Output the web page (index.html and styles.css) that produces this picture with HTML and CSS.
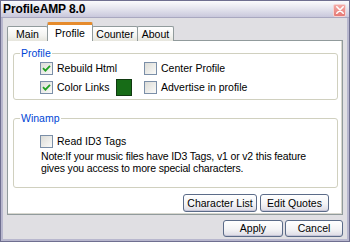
FILE: index.html
```html
<!DOCTYPE html>
<html lang="en">
<head>
    <meta charset="UTF-8">
    <title>ProfileAMP 8.0</title>
    <link rel="stylesheet" href="styles.css">
</head>
<body>
    <div class="window">
        <div class="titlebar">
            <span class="titlebar__text">ProfileAMP 8.0</span>
            <button class="titlebar__close" type="button" title="Close">
                <svg viewBox="0 0 10 10" width="8" height="8" aria-hidden="true">
                    <path d="M1 1L9 9M9 1L1 9" stroke="#fff" stroke-width="2" stroke-linecap="round"/>
                </svg>
            </button>
        </div>
        <div class="client">
            <div class="tabs">
                <div class="tab tab--main">Main</div>
                <div class="tab tab--profile tab--active">Profile</div>
                <div class="tab tab--counter">Counter</div>
                <div class="tab tab--about">About</div>
            </div>
            <div class="panel">
                <fieldset class="group group--profile">
                    <legend class="group__legend">Profile</legend>
                    <div class="group__grid">
                        <label class="check"><span class="check__box check__box--on"><svg viewBox="0 0 9 9" width="9" height="9"><path d="M1 4.2L3.4 6.6L8 1.8" fill="none" stroke="#21a121" stroke-width="1.8"/></svg></span>Rebuild Html</label>
                        <label class="check"><span class="check__box"></span>Center Profile</label>
                        <div class="check-row">
                            <label class="check"><span class="check__box check__box--on"><svg viewBox="0 0 9 9" width="9" height="9"><path d="M1 4.2L3.4 6.6L8 1.8" fill="none" stroke="#21a121" stroke-width="1.8"/></svg></span>Color Links</label>
                            <span class="swatch"></span>
                        </div>
                        <label class="check"><span class="check__box"></span>Advertise in profile</label>
                    </div>
                </fieldset>
                <fieldset class="group group--winamp">
                    <legend class="group__legend">Winamp</legend>
                    <label class="check"><span class="check__box"></span>Read ID3 Tags</label>
                    <p class="note">Note:If your music files have ID3 Tags, v1 or v2 this feature<br>gives you access to more special characters.</p>
                </fieldset>
                <div class="actions actions--panel">
                    <button class="btn btn--chars" type="button">Character List</button>
                    <button class="btn btn--quotes" type="button">Edit Quotes</button>
                </div>
            </div>
            <div class="actions actions--dialog">
                <button class="btn btn--apply" type="button">Apply</button>
                <button class="btn btn--cancel" type="button">Cancel</button>
            </div>
        </div>
    </div>
</body>
</html>
```
FILE: styles.css
```css
* {
    box-sizing: border-box;
    margin: 0;
    padding: 0;
}
:root {
    --face: #e0dfe3;
    --frame: #b8b7ce;
    --legend: #0046d5;
    --group-line: #d0d0bf;
    --tab-line: #919b9c;
}
body {
    background: var(--face);
    color: #000;
    font: 10.5px/1.2 "Liberation Sans", Arial, sans-serif;
}
.window {
    display: flex;
    flex-direction: column;
    width: 350px;
    height: 242px;
    border: 1px solid #6f6f90;
    background: var(--face);
}
.titlebar {
    display: flex;
    align-items: center;
    justify-content: space-between;
    height: 17px;
    padding: 0 3px 0 2px;
    background: linear-gradient(#fbfbfd, #e6e6ef 45%, #c9c8dc);
    border-bottom: 1px solid #a9a8c0;
}
.titlebar__text {
    font: bold 12px "Liberation Sans", Arial, sans-serif;
    letter-spacing: -0.1px;
}
.titlebar__close {
    display: flex;
    align-items: center;
    justify-content: center;
    width: 13px;
    height: 13px;
    margin-top: 2px;
    border: 1px solid #f7d3d3;
    border-radius: 2px;
    background: linear-gradient(#f3a9a5, #e57a76);
}
.client {
    display: flex;
    flex-direction: column;
    flex: 1;
    padding: 4px 4px 0 4px;
    border-left: 2px solid var(--frame);
    border-right: 2px solid var(--frame);
    border-bottom: 2px solid var(--frame);
}
.tabs {
    display: flex;
    align-items: flex-end;
    height: 19px;
    margin-bottom: -1px;
    position: relative;
    z-index: 1;
}
.tab {
    display: flex;
    align-items: center;
    justify-content: center;
    height: 15px;
    border: 1px solid var(--tab-line);
    border-bottom: 0;
    border-radius: 2px 2px 0 0;
    background: linear-gradient(#fff, #f3f3f0 60%, #e6e5dd);
}
.tab + .tab {
    margin-left: -1px;
}
.tab--main { width: 41px; }
.tab--profile { width: 46px; }
.tab--counter { width: 46px; }
.tab--about { width: 37px; }
.tab--active {
    height: 19px;
    margin: 0 -1px;
    padding-top: 1px;
    background: #fff;
    border-top: 3px solid #ffc83c;
    border-color: #e68b2c var(--tab-line) transparent;
    position: relative;
}
.tab--active + .tab {
    margin-left: 0;
}
.panel {
    display: flex;
    flex-direction: column;
    height: 175px;
    padding: 6px 4px 0 5px;
    background: #fff;
    border: 1px solid var(--tab-line);
    box-shadow: inset -1px -1px 0 #d8d7cf;
}
.group {
    border: 1px solid var(--group-line);
    border-radius: 3px;
    padding: 0 0 3px 26px;
}
.group__legend {
    color: var(--legend);
    margin-left: -20px;
    padding: 0 1px 0 1px;
    line-height: 12px;
}
.group__grid {
    display: grid;
    grid-template-columns: 104px auto;
    align-items: center;
    row-gap: 4px;
    padding-top: 2px;
}
.check-row {
    display: flex;
    align-items: center;
    gap: 6px;
}
.check {
    display: flex;
    align-items: center;
    gap: 4px;
    height: 14px;
}
.check__box {
    display: flex;
    align-items: center;
    justify-content: center;
    width: 13px;
    height: 13px;
    border: 1px solid #7b8fa8;
    background: linear-gradient(135deg, #dcdcd7, #fafaf8);
}
.swatch {
    width: 16px;
    height: 17px;
    background: #176c17;
    border: 1px solid #103a10;
}
.group--winamp {
    margin-top: 12px;
    padding-top: 5px;
    padding-bottom: 13px;
}
.group--winamp .check {
    margin-top: 5px;
}
.note {
    margin: 3px 0 0 1px;
    line-height: 11.5px;
    letter-spacing: -0.15px;
}
.actions {
    display: flex;
    justify-content: flex-end;
    gap: 3px;
}
.actions--panel {
    margin: 6px 9px 0 0;
}
.actions--dialog {
    margin-top: 5px;
    gap: 2px;
}
.btn {
    height: 18px;
    font: inherit;
    color: #000;
    border: 1px solid #5b6b88;
    border-radius: 3px;
    background: linear-gradient(#fff, #f4f4f6 55%, #dcdbe4);
    box-shadow: inset 0 -1px 0 #c6c5d7;
}
.btn--chars { width: 74px; }
.btn--quotes { width: 69px; }
.btn--apply { width: 60px; height: 17px; }
.btn--cancel { width: 58px; height: 17px; }
```
